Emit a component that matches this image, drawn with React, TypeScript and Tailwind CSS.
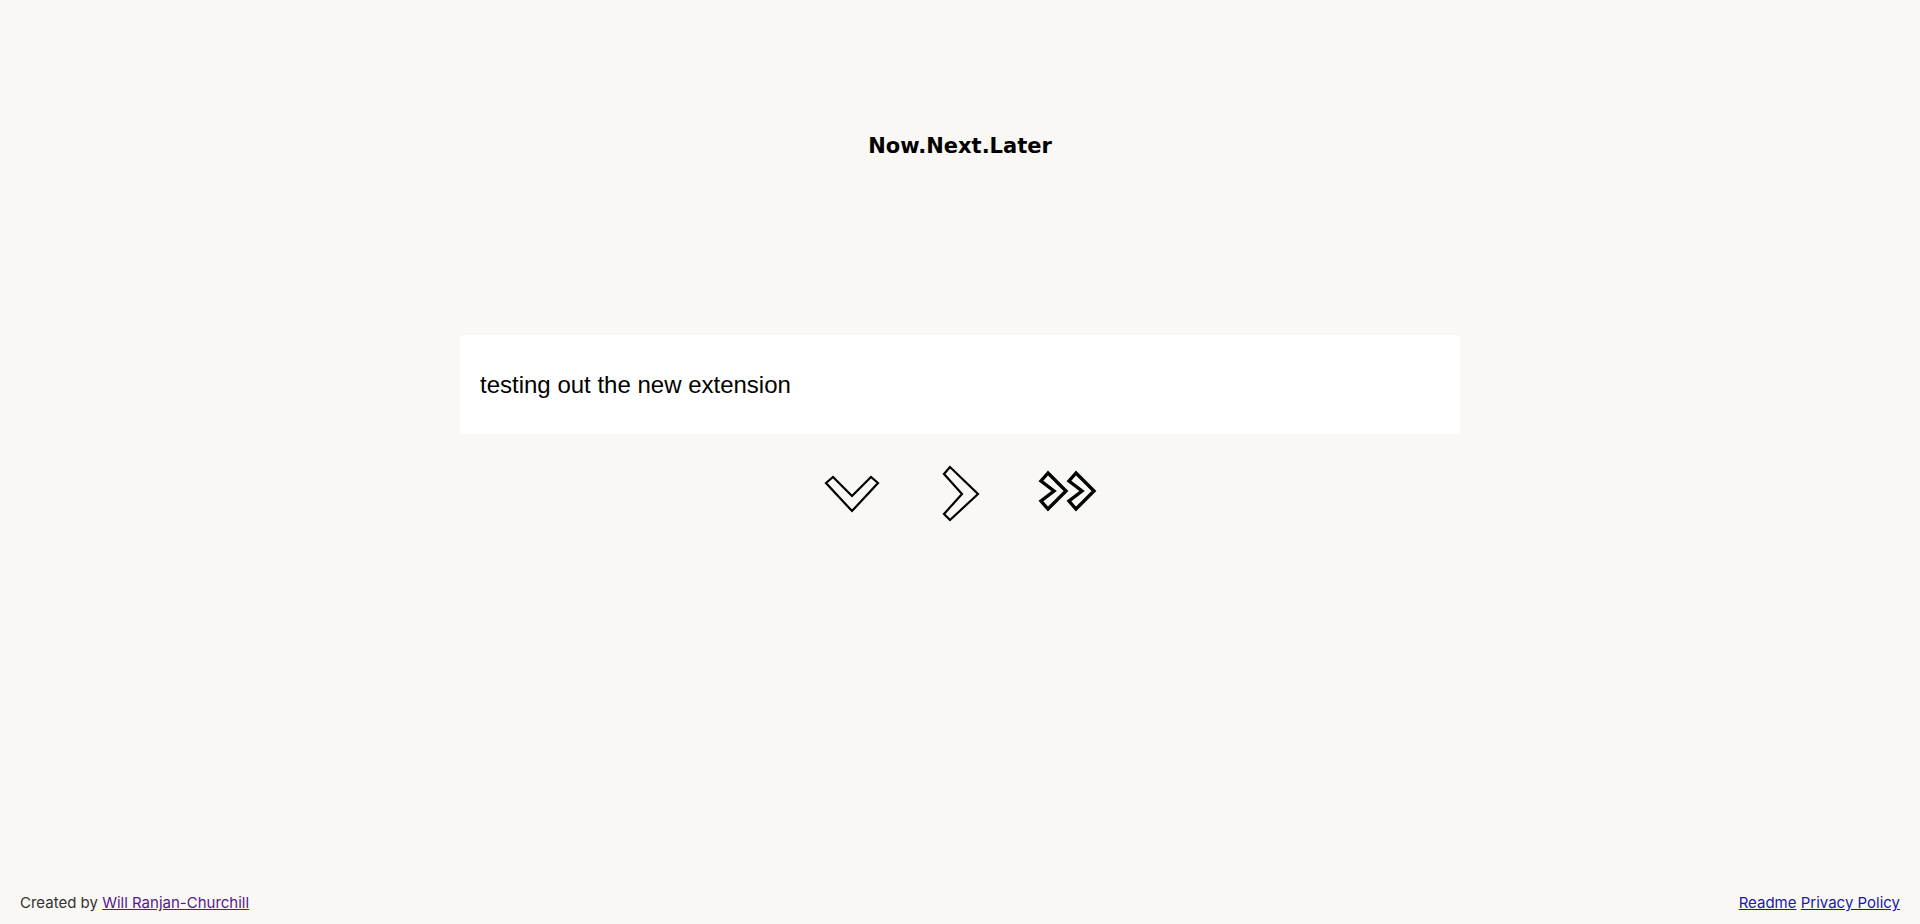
import React from 'react'

function DownIcon() {
   return (
      <svg width="56" height="60" viewBox="0 0 56 60" className="overflow-visible">
         <polygon
            points="2,19 9,13 28,32 47,13 54,19 28,47"
            fill="none"
            stroke="#000"
            strokeWidth="2.2"
         />
      </svg>
   )
}

function NextIcon() {
   return (
      <svg width="40" height="60" viewBox="0 0 40 60" className="overflow-visible">
         <polygon
            points="10,3 4,10 22,30 4,50 10,56 38,30"
            fill="none"
            stroke="#000"
            strokeWidth="2.2"
         />
      </svg>
   )
}

function LaterIcon() {
   return (
      <svg width="60" height="60" viewBox="0 0 60 60" className="overflow-visible">
         <polygon
            points="10,9 3,17 16,27 3,37 10,45 28,27"
            fill="none"
            stroke="#000"
            strokeWidth="3.4"
         />
         <polygon
            points="38,9 31,17 44,27 31,37 38,45 56,27"
            fill="none"
            stroke="#000"
            strokeWidth="3.4"
         />
      </svg>
   )
}

export default function App() {
   return (
      <div className="min-h-screen flex flex-col bg-[#f9f8f5] font-['Inter',sans-serif] text-black">
         <main className="flex-1 flex flex-col items-center pt-[132px]">
            <h1 className="font-['DejaVu_Sans',sans-serif] text-[21px] leading-7 font-bold">
               Now.Next.Later
            </h1>

            <div className="mt-[175px] w-[1000px] h-[99px] bg-white rounded-[4px] flex items-center px-5">
               <p className="font-['Liberation_Sans',Arial,sans-serif] text-[24px] text-black">
                  testing out the new extension
               </p>
            </div>

            <div className="mt-[30px] flex items-center">
               <button className="w-[108px] h-[60px] flex items-center justify-center">
                  <DownIcon />
               </button>
               <button className="w-[108px] h-[60px] flex items-center justify-center">
                  <NextIcon />
               </button>
               <button className="w-[108px] h-[60px] flex items-center justify-center">
                  <LaterIcon />
               </button>
            </div>
         </main>

         <footer className="flex items-center justify-between px-5 pb-[11px] text-[15px] leading-5">
            <p className="text-[#333]">
               Created by{' '}
               <a href="#" className="underline text-[#551a8b]">
                  Will Ranjan-Churchill
               </a>
            </p>
            <p>
               <a href="#" className="underline text-[#1a1aa6]">
                  Readme
               </a>{' '}
               <a href="#" className="underline text-[#1a1aa6]">
                  Privacy Policy
               </a>
            </p>
         </footer>
      </div>
   )
}
